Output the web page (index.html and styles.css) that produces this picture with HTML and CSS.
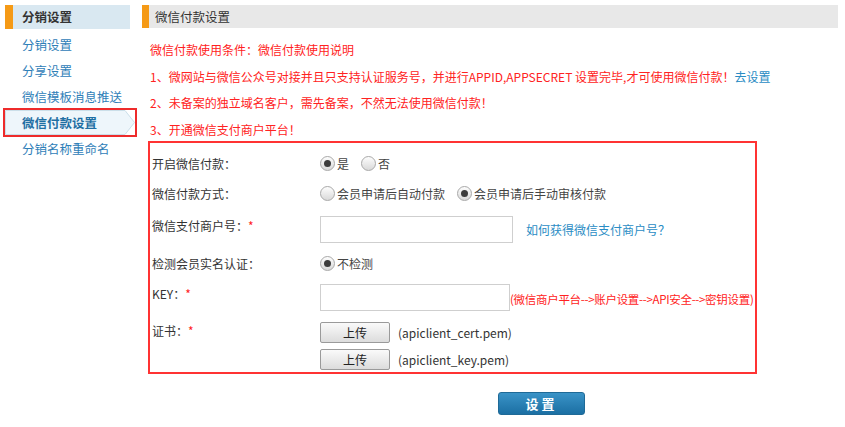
FILE: index.html
```html
<!DOCTYPE html>
<html>
    <head>
        <meta charset="utf-8">
        <meta name="viewport" content="width=device-width, initial-scale=1.0">
        <title>微信付款设置</title>
        <link rel="stylesheet" href="styles.css">
    </head>
    <body>
        <div class="page">
            <div class="side">
                <div class="side-title">分销设置</div>
                <ul class="side-menu">
                    <li><a href="#">分销设置</a></li>
                    <li><a href="#">分享设置</a></li>
                    <li><a href="#">微信模板消息推送</a></li>
                    <li class="active">
                        <svg class="tab-shape" viewBox="0 0 130 26" preserveAspectRatio="none">
                            <polygon points="0.5,0.5 120,0.5 129.5,13 120,25.5 0.5,25.5" fill="#eef6fb" stroke="#c9dde9"/>
                        </svg>
                        <a href="#">微信付款设置</a>
                    </li>
                    <li><a href="#">分销名称重命名</a></li>
                </ul>
            </div>

            <div class="main">
                <div class="main-title">微信付款设置</div>
                <div class="notes">
                    <p>微信付款使用条件：微信付款使用说明</p>
                    <p>1、微网站与微信公众号对接并且只支持认证服务号，并进行APPID,APPSECRET 设置完毕,才可使用微信付款！<a href="#">去设置</a></p>
                    <p>2、未备案的独立域名客户，需先备案，不然无法使用微信付款！</p>
                    <p>3、开通微信支付商户平台！</p>
                </div>

                <div class="form-box">
                    <div class="row row-radio">
                        <div class="label">开启微信付款：</div>
                        <div class="field">
                            <label class="opt"><input type="radio" name="open" checked>是</label>
                            <label class="opt"><input type="radio" name="open">否</label>
                        </div>
                    </div>
                    <div class="row row-radio">
                        <div class="label">微信付款方式：</div>
                        <div class="field">
                            <label class="opt"><input type="radio" name="mode">会员申请后自动付款</label>
                            <label class="opt"><input type="radio" name="mode" checked>会员申请后手动审核付款</label>
                        </div>
                    </div>
                    <div class="row row-input">
                        <div class="label">微信支付商户号：<span class="req">*</span></div>
                        <div class="field">
                            <input type="text" class="text-input">
                            <a href="#" class="help">如何获得微信支付商户号？</a>
                        </div>
                    </div>
                    <div class="row row-check">
                        <div class="label">检测会员实名认证：</div>
                        <div class="field">
                            <label class="opt"><input type="radio" name="check" checked>不检测</label>
                        </div>
                    </div>
                    <div class="row row-input">
                        <div class="label">KEY：<span class="req">*</span></div>
                        <div class="field">
                            <input type="text" class="text-input key-input">
                            <span class="tip">(微信商户平台--&gt;账户设置--&gt;API安全--&gt;密钥设置)</span>
                        </div>
                    </div>
                    <div class="row row-file">
                        <div class="label">证书：<span class="req">*</span></div>
                        <div class="field">
                            <button class="upload">上传</button>
                            <span class="file-name">(apiclient_cert.pem)</span>
                        </div>
                    </div>
                    <div class="row row-file2">
                        <div class="label"></div>
                        <div class="field">
                            <button class="upload">上传</button>
                            <span class="file-name">(apiclient_key.pem)</span>
                        </div>
                    </div>
                </div>

                <div class="actions">
                    <button class="submit">设置</button>
                </div>
            </div>
        </div>
    </body>
</html>
```

FILE: styles.css
```css
body {
    margin: 0;
    font-family: "Noto Sans CJK SC", "Noto Sans", sans-serif;
    font-size: 12px;
    color: #333;
    background: #fff;
}
a {
    text-decoration: none;
}
.page {
    display: flex;
    padding: 5px 0 0 5px;
}
.side {
    width: 125px;
    flex-shrink: 0;
}
.side-title {
    height: 24px;
    line-height: 24px;
    padding-left: 9px;
    background: #d9e8f1;
    border-left: 8px solid #f59a16;
    box-sizing: border-box;
    font-weight: bold;
    font-size: 12.5px;
    color: #333;
}
.side-menu {
    list-style: none;
    margin: 3px 0 0 0;
    padding: 0;
}
.side-menu li {
    position: relative;
    height: 26px;
    line-height: 26px;
    padding-left: 17px;
}
.side-menu a {
    position: relative;
    color: #2f80b8;
    font-size: 12.5px;
}
.side-menu .active {
    margin-left: -2px;
    margin-right: -7px;
    padding-left: 17px;
    border: 2px solid #ee2b2b;
    height: 25px;
    line-height: 25px;
    margin-top: -2px;
}
.side-menu .active + li {
    margin-top: -1px;
}
.tab-shape {
    position: absolute;
    left: 0;
    top: 0;
    width: 130px;
    height: 25px;
}
.side-menu .active a {
    font-weight: bold;
    color: #1f6fa3;
}
.main {
    margin-left: 12px;
    width: 696px;
}
.main-title {
    height: 23px;
    line-height: 23px;
    background: #e8e8e8;
    border-left: 7px solid #f59a16;
    padding-left: 6px;
    font-size: 12.5px;
    color: #333;
}
.notes {
    padding: 9px 0 0 8px;
    color: #f22;
    font-size: 12px;
}
.notes p {
    margin: 0;
    line-height: 26.5px;
}
.notes a {
    color: #2a8cc4;
}
.form-box {
    width: 609px;
    box-sizing: border-box;
    margin-left: 6px;
    margin-top: -2px;
    border: 2px solid #f33;
    padding: 5px 0 2px 0;
}
.row {
    display: flex;
    align-items: center;
}
.label {
    width: 170px;
    padding-left: 2px;
    box-sizing: border-box;
    flex-shrink: 0;
}
.field {
    display: flex;
    align-items: center;
    white-space: nowrap;
}
.row-radio {
    height: 30px;
}
.row-input {
    height: 27px;
    margin-top: 8px;
    align-items: flex-start;
}
.row-input .label {
    padding-top: 1px;
}
.row-check {
    height: 26px;
    margin-top: 7px;
}
.row-file {
    height: 22px;
    margin-top: 11px;
    align-items: flex-start;
}
.row-file2 {
    height: 21px;
    margin-top: 5px;
}
.req {
    color: #f22;
}
.opt {
    display: flex;
    align-items: center;
    margin-right: 12px;
    color: #444;
}
.opt input {
    appearance: none;
    -webkit-appearance: none;
    width: 15px;
    height: 15px;
    margin: 0 2px 0 0;
    border: 1px solid #a9a9a9;
    border-radius: 50%;
    background: linear-gradient(#fdfdfd, #d9d9d9);
    box-sizing: border-box;
    position: relative;
}
.opt input:checked::after {
    content: "";
    position: absolute;
    left: 3px;
    top: 3px;
    width: 7px;
    height: 7px;
    border-radius: 50%;
    background: #3c3c3c;
}
.text-input {
    width: 193px;
    height: 27px;
    box-sizing: border-box;
    border: 1px solid #cfcfcf;
    margin: 0;
    padding: 0 4px;
}
.key-input {
    width: 190px;
}
.help {
    margin-left: 13px;
    color: #2a8cc4;
}
.tip {
    color: #f22;
    font-size: 11.5px;
    letter-spacing: -0.3px;
    padding-top: 2px;
}
.upload {
    width: 70px;
    height: 21px;
    padding: 0;
    border: 1px solid #9a9a9a;
    border-radius: 2px;
    background: linear-gradient(#fafafa, #dcdcdc);
    font-family: inherit;
    font-size: 12px;
    color: #222;
}
.file-name {
    margin-left: 8px;
    color: #333;
}
.actions {
    margin: 18px 0 0 356px;
}
.submit {
    width: 87px;
    height: 23px;
    padding: 0;
    border: 1px solid #1f6a97;
    border-radius: 3px;
    background: linear-gradient(#3a93c7, #1b6fa3);
    color: #fff;
    font-family: inherit;
    font-weight: bold;
    font-size: 13px;
    letter-spacing: 3px;
}
```
